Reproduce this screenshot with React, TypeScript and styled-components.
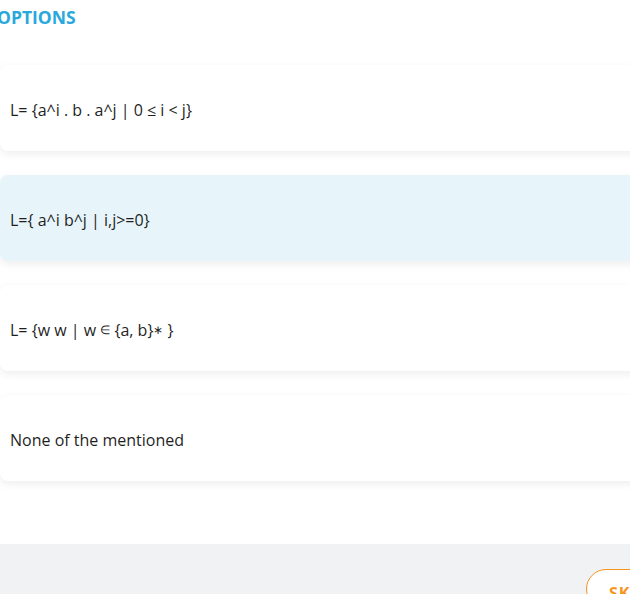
import React from 'react';
import styled, { createGlobalStyle } from 'styled-components';

const COLORS = {
    accent: '#2aa8dc',
    text: '#1f1f1f',
    selected: '#e7f5fb',
    card: '#ffffff',
    footer: '#f1f2f4',
    orange: '#f7941d',
};

const GlobalStyle = createGlobalStyle`
    html, body {
        margin: 0;
        padding: 0;
        background: #ffffff;
        overflow: hidden;
        font-family: "Open Sans", "Noto Sans", sans-serif;
    }
`;

const Page = styled.div`
    width: 630px;
    height: 594px;
    overflow: hidden;
    display: flex;
    flex-direction: column;
`;

const Content = styled.div`
    margin-left: -3px;
    width: 700px;
    flex: 1;
`;

const Heading = styled.div`
    font-size: 17.5px;
    font-weight: 700;
    color: ${COLORS.accent};
    line-height: 22px;
    padding-top: 6px;
    height: 65px;
    box-sizing: border-box;
`;

const OptionList = styled.div`
    display: flex;
    flex-direction: column;
    gap: 24px;
    margin-left: 3px;
`;

const OptionCard = styled.div<{ $selected?: boolean }>`
    height: 86px;
    display: flex;
    align-items: center;
    padding: 3px 0 0 10px;
    box-sizing: border-box;
    border-radius: 8px;
    background: ${(p) => (p.$selected ? COLORS.selected : COLORS.card)};
    box-shadow: 0 3px 8px rgba(0, 0, 0, 0.07);
    font-size: 16px;
    color: ${COLORS.text};
    white-space: pre;
    cursor: pointer;
`;

const Small = styled.span`
    font-size: 12px;
`;

const Footer = styled.div`
    height: 50px;
    background: ${COLORS.footer};
    position: relative;
    flex-shrink: 0;
`;

const SkipButton = styled.button`
    position: absolute;
    left: 586px;
    top: 25px;
    width: 110px;
    height: 40px;
    border: 1.5px solid ${COLORS.orange};
    border-radius: 20px;
    background: #ffffff;
    color: ${COLORS.orange};
    font-family: "Open Sans", sans-serif;
    font-weight: 700;
    font-size: 16px;
    text-align: left;
    padding: 8px 0 0 22px;
    letter-spacing: 1px;
`;

export default function App() {
    return (
        <Page>
            <GlobalStyle />
            <Content>
                <Heading>OPTIONS</Heading>
                <OptionList>
                    <OptionCard>{'L= {a^i . b . a^j | 0 ≤ i < j}'}</OptionCard>
                    <OptionCard $selected>{'L={ a^i b^j | i,j>=0}'}</OptionCard>
                    <OptionCard>
                        {'L= {w w | w '}
                        <Small>∈</Small>
                        {' {a, b}'}
                        <Small>∗</Small>
                        {' }'}
                    </OptionCard>
                    <OptionCard>None of the mentioned</OptionCard>
                </OptionList>
            </Content>
            <Footer>
                <SkipButton>SKIP</SkipButton>
            </Footer>
        </Page>
    );
}
